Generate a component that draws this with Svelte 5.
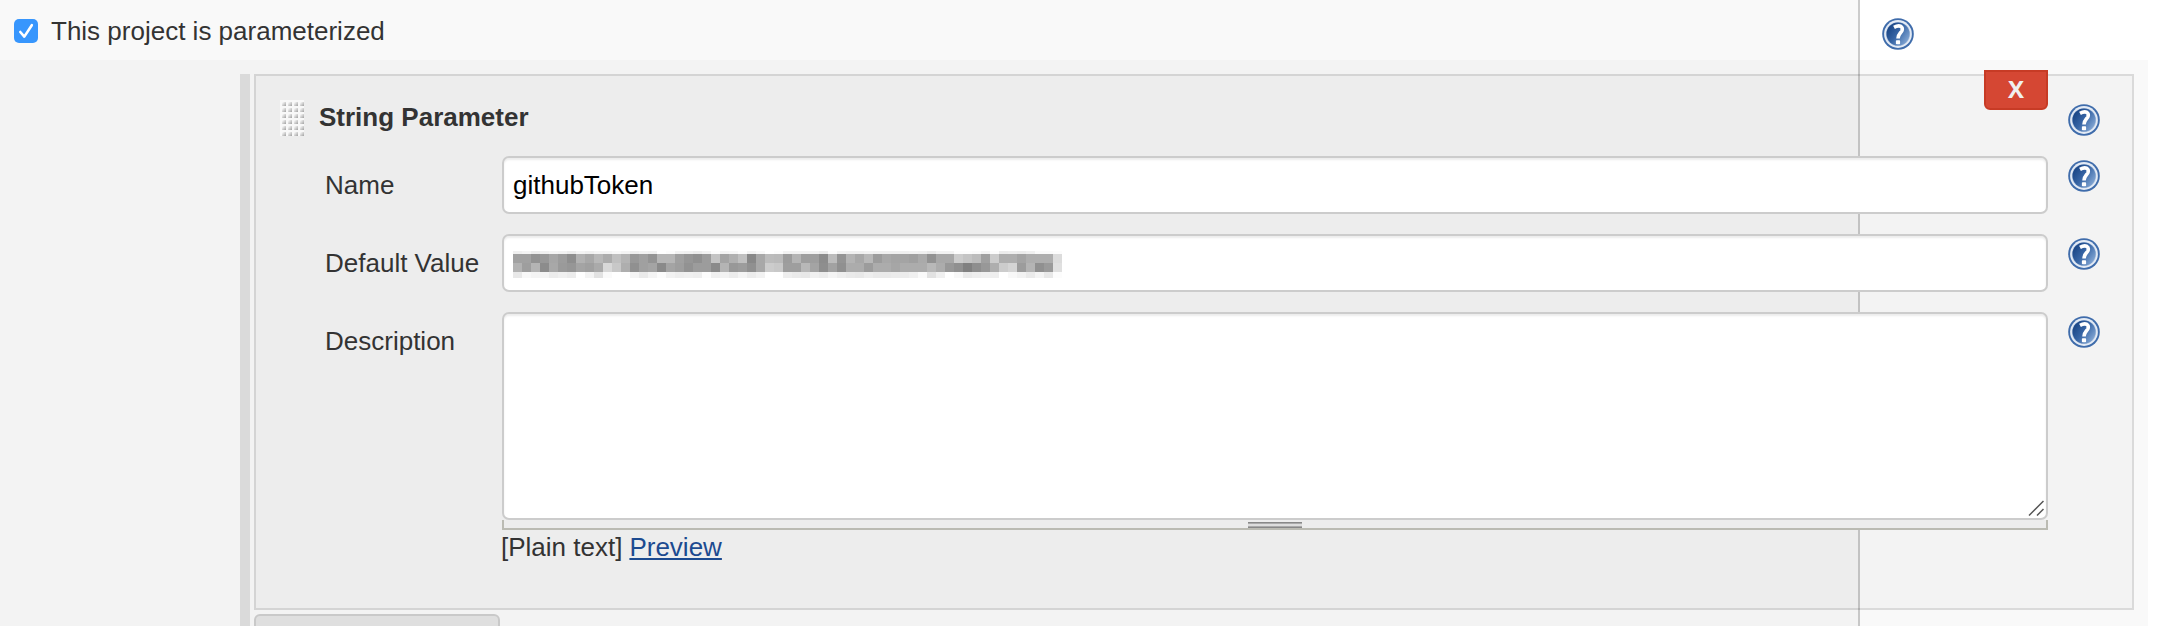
<script>
  const rows = [
    'f0 f4 ec f0 f4 f2 ec f4 f0 f4 f4 f8 f4 ee f2 f0 ff fc f2 f0 ec f2 fc f4 f6 fc f2 f8 ff fc f2 f2 f2 f2 ec fc f2 f0 f0 f2 f0 f0 f0 f0 f2 f0 ea f2 f2 fc fc fa f4 fc ec ee ec f0 fa fa fc',
    'a1 a1 92 98 a6 9c 8e b2 a8 b8 ac c0 b4 98 a0 94 b6 b6 a0 96 90 9c c4 a4 b0 c0 88 a8 bc ba 9c b4 9e 9e 8c bc 94 b4 a8 b8 9c a8 a4 a4 a0 aa 92 a8 a8 cc c4 bc a0 cc ae ae a4 ae ae ae dc',
    'b2 9e b4 8c a8 9a 96 a4 a0 aa d8 c8 ae 90 a0 a4 8a a4 9e 92 9c 9c 8a b4 98 9c 90 a8 cc c8 9e 9e b8 a4 8e a2 90 ac ac 9c ac ac a6 ac ac ac b8 ac 98 90 80 8e 98 ae cc d4 9c b4 90 9a e0',
    'e8 f8 f4 f4 ec f0 ec ff f4 e2 fa ff ff f4 ea f4 fc f2 ee f0 ee fc f0 f2 ec f4 ec f2 ff ff ee ea e8 f0 ec f4 ee ea e8 ee ea ea ec ec f0 fa e2 f0 ff f8 ea ee f0 ee ff f8 f2 ea f4 e8 fc'
  ];
  const cells = rows.flatMap((r) => r.split(' '));
</script>

{#snippet help()}
  <svg class="help" viewBox="0 0 32 32" width="32" height="32">
    <defs>
      <linearGradient id="ball" x1="0" y1="0.2" x2="1" y2="0.9">
        <stop offset="0" stop-color="#164181" />
        <stop offset="0.45" stop-color="#3765a5" />
        <stop offset="1" stop-color="#90b2dc" />
      </linearGradient>
    </defs>
    <circle cx="16" cy="16" r="15.8" fill="#3f6cab" />
    <circle cx="16" cy="16" r="13.9" fill="#e4ebf5" />
    <circle cx="16" cy="16" r="12.1" fill="#a9bfdd" />
    <circle cx="16" cy="16" r="11.5" fill="url(#ball)" />
    <path d="M12 9.3 Q15.8 7.2 18.7 8.2 Q21 9.5 20 12.6 C19 15 16 16 16 20.6" fill="none" stroke="#fff" stroke-width="3.6" />
    <rect x="13.9" y="22.2" width="4.2" height="4" rx="0.8" fill="#fff" />
  </svg>
{/snippet}

<div class="page">
  <div class="toggle">
    <label class="check">
      <svg width="24" height="24" viewBox="0 0 24 24">
        <rect width="24" height="24" rx="5" fill="#3796fd" />
        <path d="M6.3 13 L10.3 17.6 L17.8 6.2" fill="none" stroke="#fff" stroke-width="2.6" stroke-linecap="round" stroke-linejoin="round" />
      </svg>
      <span>This project is parameterized</span>
    </label>
    {@render help()}
  </div>

  <div class="body">
    <div class="bar"></div>
    <div class="list">
      <section class="card">
        <button class="remove">X</button>
        <header>
          <svg width="24" height="36">
            <defs>
              <linearGradient id="dot" x1="0" y1="0" x2="1" y2="1">
                <stop offset="0.15" stop-color="#f4f4f4" />
                <stop offset="0.9" stop-color="#aaa" />
              </linearGradient>
              <pattern id="grip" width="6" height="6" patternUnits="userSpaceOnUse">
                <rect width="6" height="6" fill="#f8f8f8" />
                <rect x="2" y="2" width="4" height="4" fill="url(#dot)" />
              </pattern>
            </defs>
            <rect width="24" height="36" fill="url(#grip)" />
          </svg>
          <h2>String Parameter</h2>
          {@render help()}
        </header>
        <div class="row">
          <span class="label">Name</span>
          <div class="input">githubToken</div>
          {@render help()}
        </div>
        <div class="row">
          <span class="label">Default Value</span>
          <div class="input">
            <div class="mosaic">
              {#each cells as c}<i style="background:#{c}{c}{c}"></i>{/each}
            </div>
          </div>
          {@render help()}
        </div>
        <div class="row">
          <span class="label">Description</span>
          <div class="area">
            <div class="input text">
              <svg width="16" height="16" viewBox="0 0 16 16" stroke="#555" stroke-width="1.5">
                <path d="M1 15.5 L15.5 1 M9 15.5 L15.5 9" fill="none" />
              </svg>
            </div>
            <div class="resize"><span></span></div>
            <div class="format"><span>[Plain text]</span><a href="#preview">Preview</a></div>
          </div>
          {@render help()}
        </div>
      </section>
      <div class="add"></div>
    </div>
  </div>
</div>

<style>
  :global(body) { margin: 0; background: #fff; overflow: hidden; }
  .page {
    box-sizing: border-box;
    width: 2170px;
    height: 626px;
    overflow: hidden;
    font: 26px/30px "Liberation Sans", Arial, sans-serif;
    color: #333;
    background: linear-gradient(90deg, #f9f9f9 1858px, #ccc 1858px, #ccc 1860px, #fff 1860px);
  }
  .help { display: block; flex: none; }
  .toggle { display: flex; height: 60px; box-sizing: border-box; padding: 18px 0 0 14px; }
  .check { display: flex; width: 1868px; gap: 13px; padding-top: 1px; height: 24px; }
  .check svg { flex: none; }
  .check span { line-height: 24px; }
  .body {
    display: flex;
    gap: 4px;
    box-sizing: border-box;
    width: 2148px;
    height: 566px;
    padding: 14px 14px 0 240px;
    background: rgba(0, 0, 0, 0.025);
  }
  .bar { width: 10px; background: rgba(0, 0, 0, 0.1); }
  .list { display: flex; flex-direction: column; gap: 4px; }
  .card {
    position: relative;
    box-sizing: border-box;
    width: 1880px;
    height: 536px;
    padding: 24px 32px 0 24px;
    border: 2px solid rgba(0, 0, 0, 0.1);
    background: rgba(0, 0, 0, 0.025);
    display: flex;
    flex-direction: column;
    flex: none;
  }
  .remove {
    position: absolute;
    top: -6px;
    right: 84px;
    width: 64px;
    height: 40px;
    padding: 0 0 2px;
    border: 2px solid #c73b25;
    border-radius: 0 0 6px 6px;
    background: #d54733;
    color: #f0f0f0;
    font: bold 24px/34px "Open Sans", sans-serif;
  }
  header { display: flex; height: 56px; }
  header .help { margin: 4px 0 0 auto; }
  h2 { margin: 2px 0 0 15px; font-size: 26px; line-height: 30px; white-space: nowrap; }
  .row { display: flex; }
  .row + .row { margin-top: 20px; }
  .row .help { margin: 4px 0 0 20px; }
  .label { width: 177px; padding: 14px 0 0 45px; white-space: nowrap; }
  .input {
    box-sizing: border-box;
    width: 1546px;
    height: 58px;
    border: 2px solid #ccc;
    border-radius: 7px;
    background: #fff;
    box-shadow: inset 0 2px 2px rgba(0, 0, 0, 0.075);
    color: #000;
    padding: 12px 9px 0;
  }
  .mosaic {
    display: grid;
    grid-template-columns: repeat(61, 9px);
    grid-template-rows: 3px 9px 9px 6px;
    margin-top: 3px;
  }
  .area { display: flex; flex-direction: column; }
  .text { height: 208px; display: flex; justify-content: flex-end; align-items: flex-end; padding: 0 2px 2px; }
  .resize {
    box-sizing: border-box;
    height: 10px;
    border: solid #bbbbb3;
    border-width: 0 2px 2px;
    background: #ededed;
    display: flex;
    justify-content: center;
    padding-top: 2px;
  }
  .resize span {
    width: 54px;
    height: 6px;
    background: linear-gradient(#888 1px, #aaa 1px, #aaa 2px, #ddd 2px, #ddd 4px, #aaa 4px, #aaa 5px, #888 5px);
  }
  .format { display: flex; gap: 7px; padding-top: 2px; margin-left: -1px; }
  a { color: #1c4a90; text-decoration: underline; text-decoration-thickness: 2px; text-underline-offset: 2px; text-decoration-skip-ink: none; }
  .add {
    flex: none;
    box-sizing: border-box;
    width: 246px;
    height: 52px;
    border: 2px solid #c9c9c9;
    border-radius: 6px;
    background: #dfdfdf;
  }
</style>
